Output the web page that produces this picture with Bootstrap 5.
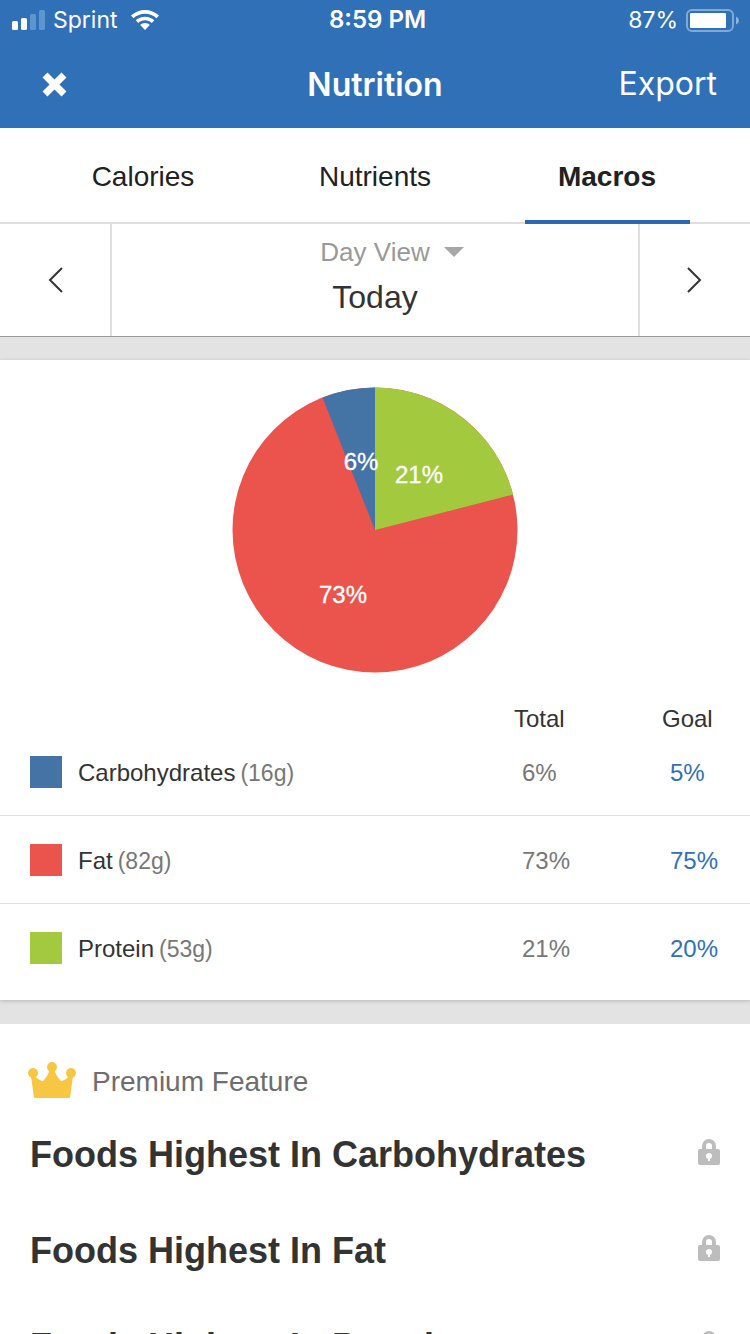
<!DOCTYPE html>
<html lang="en">
<head>
<meta charset="utf-8">
<meta name="viewport" content="width=device-width, initial-scale=1">
<title>Nutrition</title>
<link rel="stylesheet" href="https://cdn.jsdelivr.net/npm/bootstrap@5.3.0/dist/css/bootstrap.min.css">
<style>
  body { font-family: "Liberation Sans", Arial, sans-serif; font-size: 24px; color: #333; background: #e3e3e3; }
  svg { display: block; flex: none; }
  .app-header { background: #2f70b7; font-family: Inter, "Liberation Sans", sans-serif; }
  .status-row { height: 40px; padding: 0 11px 0 12px; font-size: 23px; line-height: 42px; }
  .status-row .clock { font-size: 24px; padding-left: 4px; }
  .title-row { height: 88px; padding: 0 33px; font-size: 32px; }
  .title-row h1 { font-size: 32px; line-height: 40px; padding-top: 2px; }
  .title-row .btn { font-size: 32px; line-height: 40px; }
  .title-row .side { line-height: 40px; }
  .close-btn { padding: 0 9px; }
  .side { flex: 1 1 0; }
  .tab-row { height: 96px; padding: 0 27px; border-bottom: 2px solid #dfdfdf; font-size: 28px; }
  .tab-row .nav-link { width: 165px; height: 96px; padding: 0; line-height: 98px; color: #212121; text-align: center; }
  .tab-row .nav-link.active { font-weight: 700; border-bottom: 4px solid #2b66ae; }
  .date-row { height: 113px; border-bottom: 1px solid #999; }
  .step-btn { width: 110px; }
  .date-mid { border: solid #dfdfdf; border-width: 0 2px; padding-top: 10px; }
  .view-btn { font-size: 26px; line-height: 36px; color: #999; gap: 14px; padding-left: 34px; }
  .day-name { font-size: 32px; line-height: 54px; }
  .macro-card { margin: 23px 0 24px; padding: 27px 0 9px; box-shadow: 0 1px 4px rgba(0,0,0,.2); }
  .pie text { font-size: 24px; fill: #fff; stroke: #fff; stroke-width: .3; text-anchor: middle; }
  .macro-table { margin-top: 31px; table-layout: fixed; width: 100%; }
  .macro-table th { font-weight: 400; padding: 0; line-height: 30px; }
  .macro-table td { padding: 29px 0 26px 8px; line-height: 32px; color: #777; }
  .macro-table tbody th { padding: 28px 0 27px 30px; line-height: 34px; }
  .macro-table tbody th .d-flex { height: 32px; }
  .macro-table tbody tr:first-child th { padding-top: 22px; }
  .macro-table tbody tr:first-child td { padding-top: 23px; }
  .macro-table tbody tr + tr { border-top: 1px solid #dfdfdf; }
  .macro-table .c-total { width: 148px; }
  .macro-table .c-goal { width: 88px; }
  .macro-table a { color: #2f70b7; }
  .macro-table .grams { color: #777; font-size: 23px; margin-left: 5px; }
  .swatch { width: 32px; height: 32px; margin-right: 16px; }
  .carbs { background: #4474a5; } .fat { background: #eb544d; } .protein { background: #a3ca3e; }
  .premium-head { height: 82px; padding: 32px 28px 0; font-size: 28px; color: #6d6d6d; gap: 16px; }
  .premium-head span { padding-top: 2px; }
  .premium-head svg { margin-bottom: 2px; }
  .food-row { height: 96px; padding: 0 30px; color: #333; }
  .food-row h2 { font-size: 36px; line-height: 48px; font-weight: 700; padding-top: 2px; }
  .food-row svg { margin-bottom: 4px; }
</style>
</head>
<body>
<header class="app-header text-white">
  <div class="status-row d-flex align-items-center">
    <div class="side d-flex align-items-center">
      <svg width="33" height="20" viewBox="0 0 33 20" fill="#fff" aria-hidden="true"><rect y="11" width="6" height="9" rx="1.5"/><rect x="9" y="8" width="6" height="12" rx="1.5"/><g fill="#5c96cd"><rect x="18" y="4" width="6" height="16" rx="1.5"/><rect x="27" width="6" height="20" rx="1.5"/></g></svg>
      <span class="ms-2">Sprint</span>
      <svg class="ms-2" width="36" height="20" viewBox="-5 0 36 20" fill="#fff" aria-hidden="true"><path d="M14 0C8.700 0 3.800 2 0 5.500L2.500 8.200C5.600 5.400 9.600 3.800 14 3.800S22.400 5.400 25.500 8.200L28 5.500C24.200 2 19.300 0 14 0ZM14 6.700C10.500 6.700 7.300 8 4.700 10.300L7.200 12.900C9.100 11.200 11.400 10.300 14 10.300S18.900 11.200 20.800 12.900L23.300 10.300C20.700 8 17.500 6.700 14 6.700ZM14 13C12.100 13 10.500 13.700 9.200 14.900L14 20L18.800 14.900C17.500 13.700 15.900 13 14 13Z"/></svg>
    </div>
    <div class="clock fw-semibold">8:59 PM</div>
    <div class="side d-flex align-items-center justify-content-end">
      <span class="me-2">87%</span>
      <svg width="53" height="23" viewBox="0 0 53 23" aria-hidden="true"><rect x="1" y="1" width="46" height="21" rx="5" fill="none" stroke="#7fa9d6" stroke-width="2"/><rect x="4" y="4" width="36" height="15" rx="1" fill="#fff"/><path d="M50 7.500Q53 9 53 11.500T50 15.500Z" fill="#8fb4db"/></svg>
    </div>
  </div>
  <div class="title-row d-flex align-items-center">
    <div class="side d-flex"><button type="button" class="close-btn btn py-0 border-0" aria-label="Close"><svg width="25" height="25" viewBox="0 0 25 25" aria-hidden="true"><path d="M3 3L22 22M22 3L3 22" stroke="#fff" stroke-width="7"/></svg></button></div>
    <h1 class="m-0 fw-semibold">Nutrition</h1>
    <div class="side d-flex justify-content-end"><button type="button" class="btn p-0 border-0 text-white">Export</button></div>
  </div>
</header>

<main>
  <nav class="tab-row nav nav-fill bg-white" aria-label="Nutrition views">
    <div class="side d-flex justify-content-center"><a class="nav-link" href="#calories">Calories</a></div>
    <div class="side d-flex justify-content-center"><a class="nav-link" href="#nutrients">Nutrients</a></div>
    <div class="side d-flex justify-content-center"><a class="nav-link active" href="#macros" aria-current="page">Macros</a></div>
  </nav>

  <div class="date-row d-flex bg-white">
    <button type="button" class="step-btn btn border-0 p-0 d-flex align-items-center justify-content-center" aria-label="Previous day"><svg width="16" height="26" viewBox="0 0 16 26" aria-hidden="true"><path d="M15 1L3 13L15 25" fill="none" stroke="#333" stroke-width="2"/></svg></button>
    <div class="date-mid flex-grow-1 d-flex flex-column align-items-center">
      <button type="button" class="view-btn btn border-0 py-0 pe-0 d-flex align-items-center">Day View <svg width="20" height="10" viewBox="0 0 20 10" aria-hidden="true"><path d="M0 0H20L10 10Z" fill="#a6a6a6"/></svg></button>
      <div class="day-name">Today</div>
    </div>
    <button type="button" class="step-btn btn border-0 p-0 d-flex align-items-center justify-content-center" aria-label="Next day"><svg width="16" height="26" viewBox="0 0 16 26" aria-hidden="true"><path d="M1 1L13 13L1 25" fill="none" stroke="#333" stroke-width="2"/></svg></button>
  </div>

  <section class="macro-card bg-white" id="macros">
    <svg class="pie mx-auto" width="286" height="286" viewBox="0 0 286 286" role="img" aria-label="Share of macros">
      <circle cx="143" cy="143" r="142.500" fill="#eb544d"/>
      <path d="M143 143V.5A142.500 142.500 0 0 1 281 107.600Z" fill="#a3ca3e"/>
      <path d="M143 143V.5A142.500 142.500 0 0 0 90.500 10.500Z" fill="#4474a5"/>
      <text x="129" y="83">6%</text>
      <text x="187" y="96">21%</text>
      <text x="111" y="216">73%</text>
    </svg>
    <table class="macro-table">
      <thead>
        <tr><th></th><th class="c-total" scope="col">Total</th><th class="c-goal" scope="col">Goal</th></tr>
      </thead>
      <tbody>
        <tr><th scope="row"><div class="d-flex"><span class="swatch carbs"></span><span>Carbohydrates<span class="grams">(16g)</span></span></div></th><td>6%</td><td><a class="text-decoration-none" href="#goals">5%</a></td></tr>
        <tr><th scope="row"><div class="d-flex"><span class="swatch fat"></span><span>Fat<span class="grams">(82g)</span></span></div></th><td>73%</td><td><a class="text-decoration-none" href="#goals">75%</a></td></tr>
        <tr><th scope="row"><div class="d-flex"><span class="swatch protein"></span><span>Protein<span class="grams">(53g)</span></span></div></th><td>21%</td><td><a class="text-decoration-none" href="#goals">20%</a></td></tr>
      </tbody>
    </table>
  </section>

  <section class="bg-white">
    <svg width="0" height="0" aria-hidden="true"><defs>
      <symbol id="lock" viewBox="0 0 22 26"><path d="M6 11V7A5 5 0 0 1 16 7V11" fill="none" stroke="#bdbdbd" stroke-width="4"/><rect y="10" width="22" height="16" rx="2" fill="#bdbdbd"/><circle cx="11" cy="17" r="3" fill="#fff"/><path d="M10 18H12V22H10Z" fill="#fff"/></symbol>
    </defs></svg>
    <div class="premium-head d-flex align-items-center">
      <svg width="48" height="36" viewBox="0 0 48 36" fill="#f7c744" aria-hidden="true"><circle cx="24" cy="5" r="5"/><circle cx="5" cy="11" r="5"/><circle cx="43" cy="11" r="5"/><path d="M22 7H26Q28 14 33 19Q39 18 42 12L45 14L42 36H6L3 14L6 12Q9 18 15 19Q20 14 22 7Z"/></svg>
      <span>Premium Feature</span>
    </div>
    <div class="food-row d-flex align-items-center justify-content-between"><h2 class="m-0">Foods Highest In Carbohydrates</h2><svg width="22" height="26" role="img" aria-label="Locked"><use href="#lock"/></svg></div>
    <div class="food-row d-flex align-items-center justify-content-between"><h2 class="m-0">Foods Highest In Fat</h2><svg width="22" height="26" role="img" aria-label="Locked"><use href="#lock"/></svg></div>
    <div class="food-row d-flex align-items-center justify-content-between"><h2 class="m-0">Foods Highest In Protein</h2><svg width="22" height="26" role="img" aria-label="Locked"><use href="#lock"/></svg></div>
  </section>
</main>
<script src="https://cdn.jsdelivr.net/npm/bootstrap@5.3.0/dist/js/bootstrap.bundle.min.js"></script>
</body>
</html>
